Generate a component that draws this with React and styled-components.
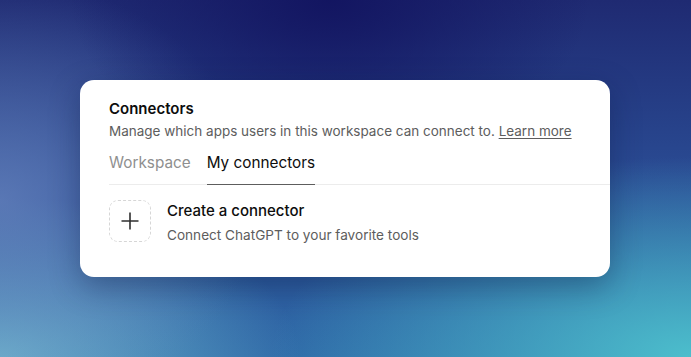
import React, { useState } from 'react';
import styled, { createGlobalStyle } from 'styled-components';

const GlobalStyle = createGlobalStyle`
  html, body {
    margin: 0;
    padding: 0;
  }
  body {
    font-family: Inter, "Noto Sans", sans-serif;
    -webkit-font-smoothing: antialiased;
  }
`;

const Backdrop = styled.div`
  width: 691px;
  height: 357px;
  overflow: hidden;
  box-sizing: border-box;
  padding: 80px 81px 80px 80px;
  background:
    radial-gradient(ellipse 260px 160px at 330px 0px, rgba(18, 20, 96, 0.95), rgba(18, 20, 96, 0) 100%),
    radial-gradient(ellipse 260px 220px at 0px 200px, rgba(104, 132, 190, 0.75), rgba(104, 132, 190, 0) 100%),
    radial-gradient(ellipse 420px 200px at 691px 357px, rgba(76, 190, 204, 1), rgba(76, 190, 204, 0) 100%),
    radial-gradient(ellipse 300px 160px at 0px 357px, rgba(108, 178, 204, 1), rgba(108, 178, 204, 0) 100%),
    linear-gradient(180deg, #1f2a72 0%, #2b4f97 55%, #2f6aa8 100%);
`;

const Card = styled.div`
  background: #ffffff;
  border-radius: 14px;
  box-shadow: 0 10px 30px rgba(10, 20, 60, 0.35);
  padding: 19px 0 32px 29px;
  display: flex;
  flex-direction: column;
`;

const Title = styled.h2`
  margin: 0;
  font-size: 15px;
  line-height: 20px;
  font-weight: 600;
  color: #0d0d0d;
`;

const Subtitle = styled.p`
  margin: 2px 0 0;
  font-size: 13.5px;
  line-height: 20px;
  color: #5d5d5d;

  a {
    color: #5d5d5d;
    text-decoration: underline;
    text-underline-offset: 2px;
  }
`;

const TabList = styled.div`
  display: flex;
  gap: 16px;
  margin-top: 2px;
  border-bottom: 1px solid #ececec;
`;

const Tab = styled.button`
  background: none;
  border: none;
  padding: 10px 0 11px;
  margin: 0 0 -1px;
  font-family: inherit;
  font-size: 15.3px;
  line-height: 20px;
  cursor: pointer;
  color: ${p => (p.$active ? '#0d0d0d' : '#8f8f8f')};
  border-bottom: 1px solid ${p => (p.$active ? '#5d5d5d' : 'transparent')};
`;

const Item = styled.div`
  display: flex;
  align-items: flex-start;
  gap: 16px;
  padding-top: 15px;
`;

const AddBox = styled.div`
  width: 42px;
  height: 42px;
  box-sizing: border-box;
  border: 1px dashed #d6d6d6;
  border-radius: 9px;
  display: flex;
  align-items: center;
  justify-content: center;
  flex-shrink: 0;
`;

const ItemText = styled.div`
  display: flex;
  flex-direction: column;
  padding-top: 1px;
`;

const ItemTitle = styled.div`
  font-size: 15px;
  line-height: 20px;
  font-weight: 500;
  color: #0d0d0d;
`;

const ItemDesc = styled.div`
  margin-top: 4px;
  font-size: 13.6px;
  line-height: 20px;
  color: #5d5d5d;
`;

const PlusIcon = () => (
  <svg width="18" height="18" viewBox="0 0 18 18" fill="none">
    <path d="M9 0.5v17M0.5 9h17" stroke="#2f2f2f" strokeWidth="1.6" />
  </svg>
);

export default function App() {
  const [tab, setTab] = useState('mine');

  return (
    <>
      <GlobalStyle />
      <Backdrop>
        <Card>
          <Title>Connectors</Title>
          <Subtitle>
            Manage which apps users in this workspace can connect to. <a href="#">Learn more</a>
          </Subtitle>
          <TabList>
            <Tab $active={tab === 'workspace'} onClick={() => setTab('workspace')}>
              Workspace
            </Tab>
            <Tab $active={tab === 'mine'} onClick={() => setTab('mine')}>
              My connectors
            </Tab>
          </TabList>
          <Item>
            <AddBox>
              <PlusIcon />
            </AddBox>
            <ItemText>
              <ItemTitle>Create a connector</ItemTitle>
              <ItemDesc>Connect ChatGPT to your favorite tools</ItemDesc>
            </ItemText>
          </Item>
        </Card>
      </Backdrop>
    </>
  );
}
